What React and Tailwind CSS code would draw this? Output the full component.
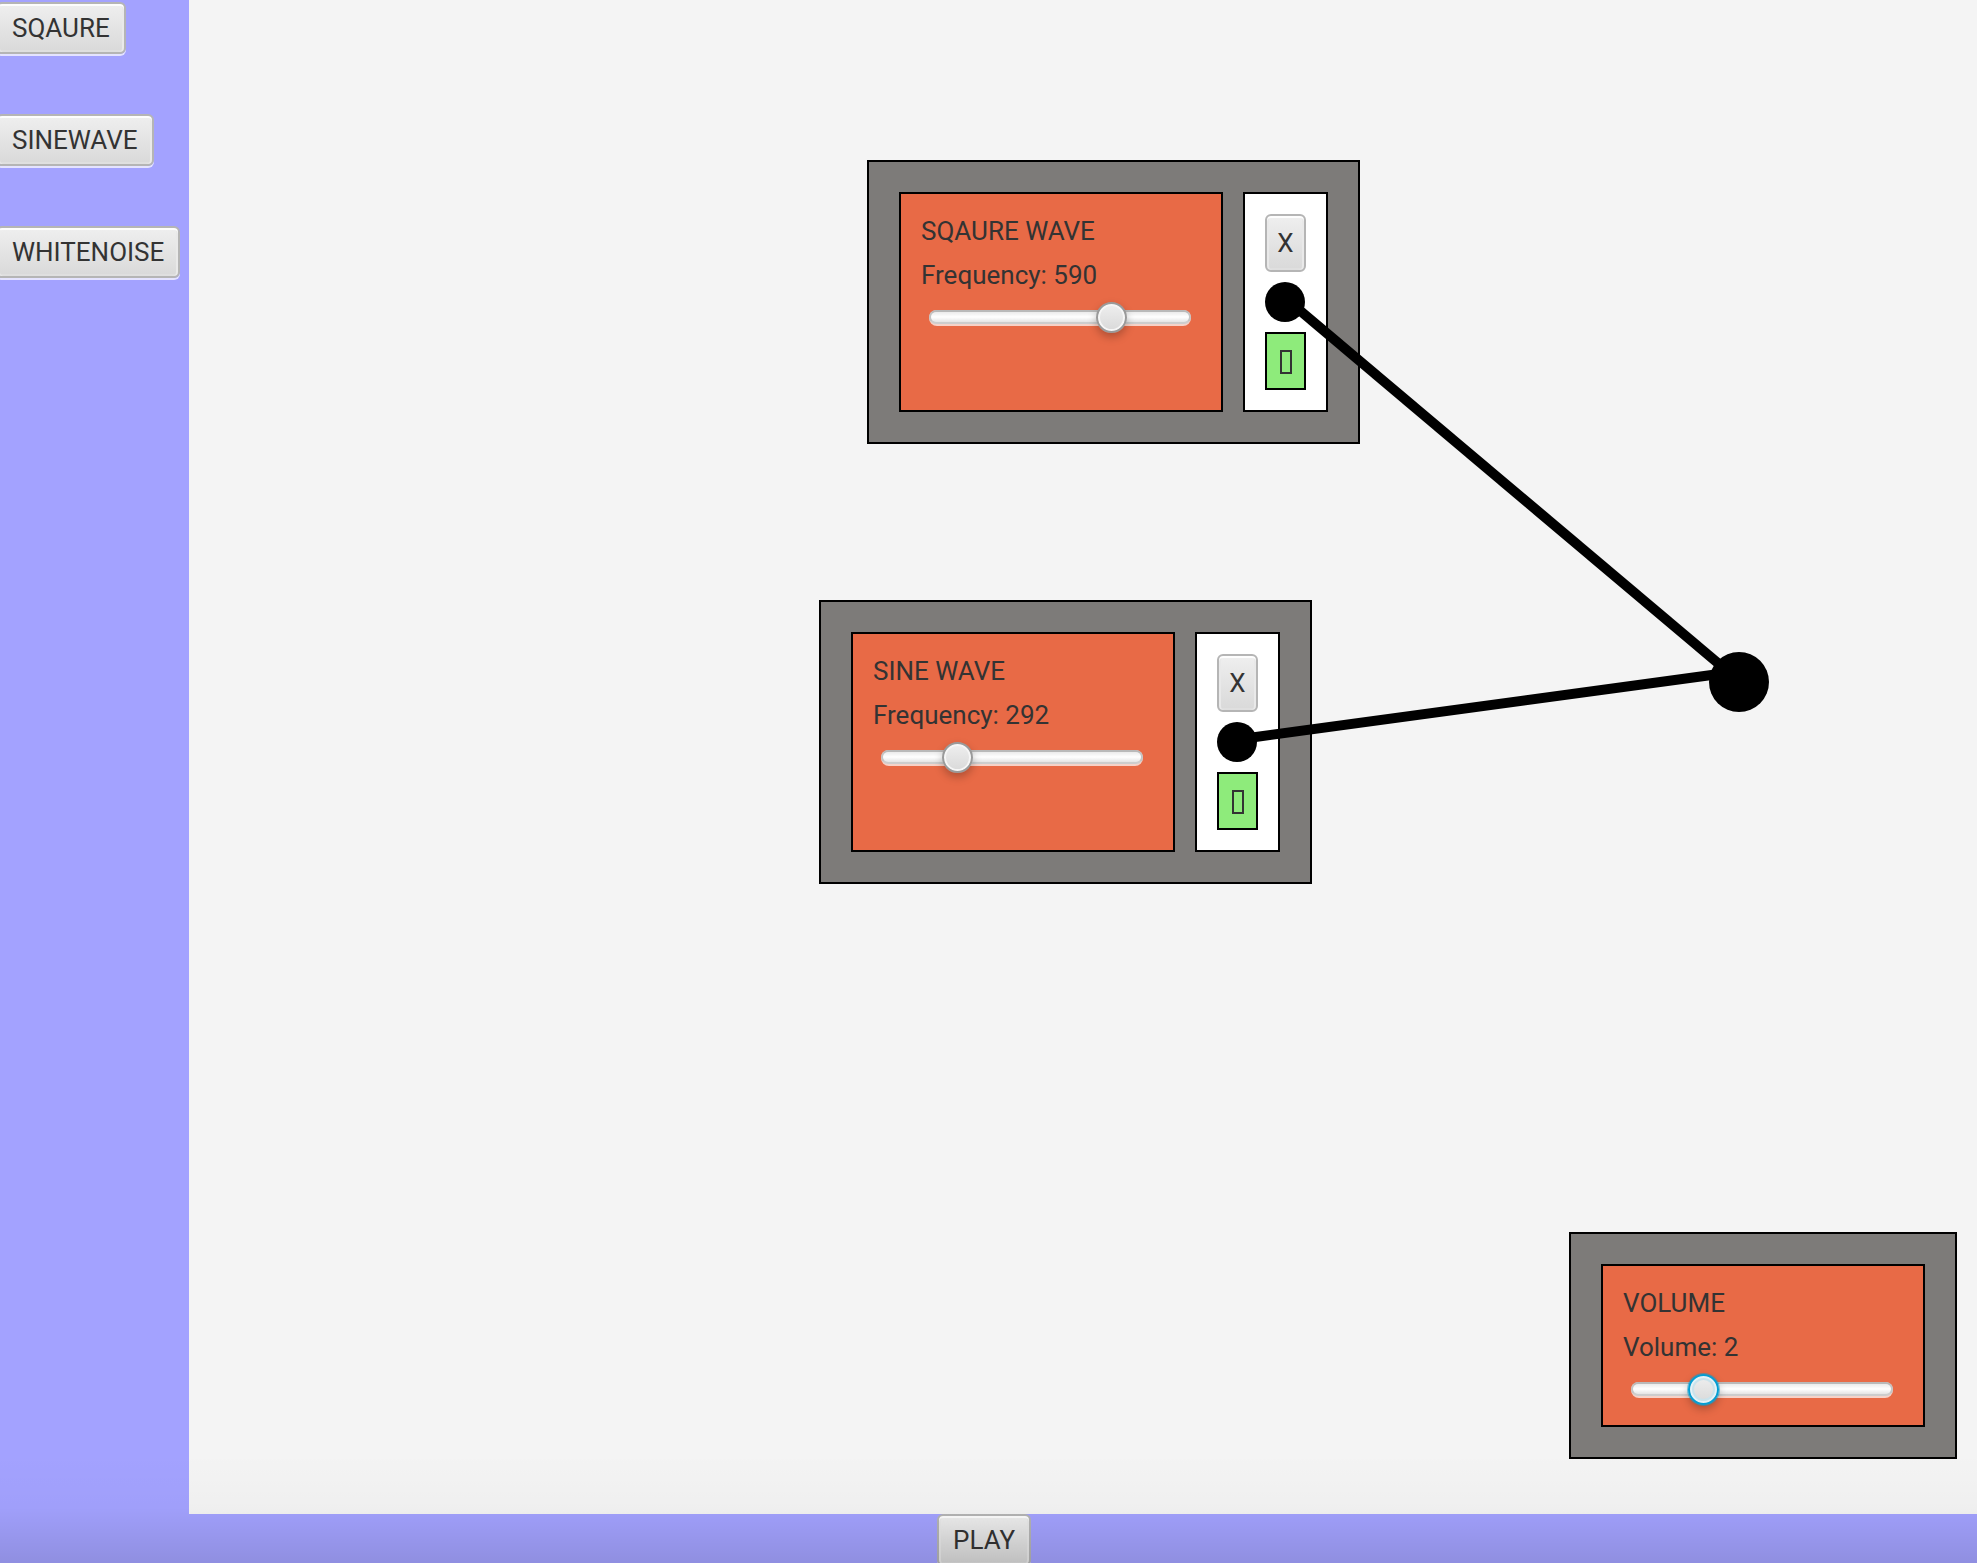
import { useState } from "react";

const BUTTON =
  "flex items-center justify-center rounded-md border-2 border-[#b5b5b5] bg-linear-to-b from-[#efefef] to-[#d9d9d9]";

const BEVEL =
  "shadow-[inset_0_2px_0_#fdfdfd,inset_2px_0_0_#e9e9e9,inset_-2px_0_0_#e9e9e9,inset_0_-2px_0_#dfdfdf,0_2px_0_rgba(255,255,255,0.7)]";

function Button({ children }) {
  return (
    <button type="button" className={BUTTON + " " + BEVEL + " h-[52px] shrink-0 px-3.5 leading-[34px]"}>
      {children}
    </button>
  );
}

function Slider({ id, min, max, value, onChange, focused }) {
  const thumb = focused
    ? "[&::-webkit-slider-thumb]:border-[#039ed3] [&::-webkit-slider-thumb]:shadow-[inset_0_0_0_2px_#e4f2f7,inset_0_0_0_4px_#c9e3ec,0_0_0_1px_rgba(3,158,211,0.5),0_4px_8px_rgba(0,0,0,0.25)]"
    : "[&::-webkit-slider-thumb]:border-[#9a9a9a] [&::-webkit-slider-thumb]:shadow-[inset_0_0_0_2px_#f6f6f6,0_4px_8px_rgba(0,0,0,0.25)]";
  return (
    <div className="grid h-[31px] items-center">
      <div className="col-start-1 row-start-1 ml-2 mr-2.5 rounded-lg bg-[#f6d2c8] pb-0.5">
        <div className="h-3.5 rounded-lg border-2 border-t-[#b9b9b9] border-x-[#c4c4c4] border-b-[#cdcdcd] bg-linear-to-b from-[#ebebeb] via-white to-[#e4e4e4]" />
      </div>
      <input
        id={id}
        type="range"
        min={min}
        max={max}
        step="0.01"
        value={value}
        onChange={(e) => onChange(Number(e.target.value))}
        className={
          "col-start-1 row-start-1 h-[31px] w-full appearance-none bg-transparent outline-none [&::-webkit-slider-thumb]:size-[31px] [&::-webkit-slider-thumb]:appearance-none [&::-webkit-slider-thumb]:rounded-full [&::-webkit-slider-thumb]:border-2 [&::-webkit-slider-thumb]:bg-linear-to-b [&::-webkit-slider-thumb]:from-[#efefef] [&::-webkit-slider-thumb]:to-[#d9d9d9] " +
          thumb
        }
      />
    </div>
  );
}

function Controls({ id, title, label, min, max, initial, focused }) {
  const [value, setValue] = useState(initial);
  return (
    <div className="flex w-[324px] flex-col gap-2.5 border-2 border-black bg-[#e86a46] p-5 leading-[34px]">
      <h2>{title}</h2>
      <label htmlFor={id}>
        {label}: {Math.floor(value)}
      </label>
      <Slider id={id} min={min} max={max} value={value} onChange={setValue} focused={focused} />
    </div>
  );
}

function Widget({ place, children }) {
  return (
    <section className={"absolute flex gap-5 border-2 border-black bg-[#7d7b79] p-[30px] " + place}>
      {children}
    </section>
  );
}

function Ports({ name }) {
  return (
    <div className="flex flex-col gap-2.5 border-2 border-black bg-white p-5">
      <button type="button" className={BUTTON + " " + BEVEL + " h-[58px] w-[41px]"}>
        X
      </button>
      <div className="size-10 rounded-full bg-black" />
      <button
        type="button"
        aria-label={"Move " + name}
        className="flex h-[58px] w-[41px] items-center justify-center border-2 border-black bg-[#8eeb7b] pt-0.5"
      >
        <span className="h-6 w-3 border-2 border-[#333333]" />
      </button>
    </div>
  );
}

export default function App() {
  return (
    <div className="relative flex h-screen flex-col overflow-hidden bg-[#a3a2ff] font-['Roboto',sans-serif] text-[26px] text-[#333333]">
      <div className="flex min-h-0 flex-1">
        <nav className="-ml-1 flex w-[193px] shrink-0 flex-col items-start gap-[60px] pt-0.5">
          <Button>SQAURE</Button>
          <Button>SINEWAVE</Button>
          <Button>WHITENOISE</Button>
        </nav>
        <main className="relative flex-1 bg-[#f4f4f4]">
          <Widget place="left-[678px] top-40">
            <Controls id="square" title="SQAURE WAVE" label="Frequency" min={100} max={800} initial={590.99} />
            <Ports name="square wave" />
          </Widget>
          <Widget place="left-[630px] top-[600px]">
            <Controls id="sine" title="SINE WAVE" label="Frequency" min={100} max={800} initial={292.99} />
            <Ports name="sine wave" />
          </Widget>
          <Widget place="bottom-[55px] right-5">
            <Controls id="volume" title="VOLUME" label="Volume" min={0} max={10} initial={2.62} focused />
          </Widget>
          <svg className="pointer-events-none absolute inset-0 size-full" stroke="black" strokeWidth="10">
            <line x1="1102" y1="303" x2="1530" y2="664" />
            <line x1="1052" y1="739" x2="1530" y2="674" />
            <circle cx="1550" cy="682" r="30" stroke="none" />
          </svg>
        </main>
      </div>
      <footer className="flex h-[49px] shrink-0 items-start justify-center pr-[9px]">
        <Button>PLAY</Button>
      </footer>
      <div className="pointer-events-none absolute inset-x-0 bottom-0 h-[110px] bg-linear-to-b from-transparent via-black/2 to-black/12" />
    </div>
  );
}
